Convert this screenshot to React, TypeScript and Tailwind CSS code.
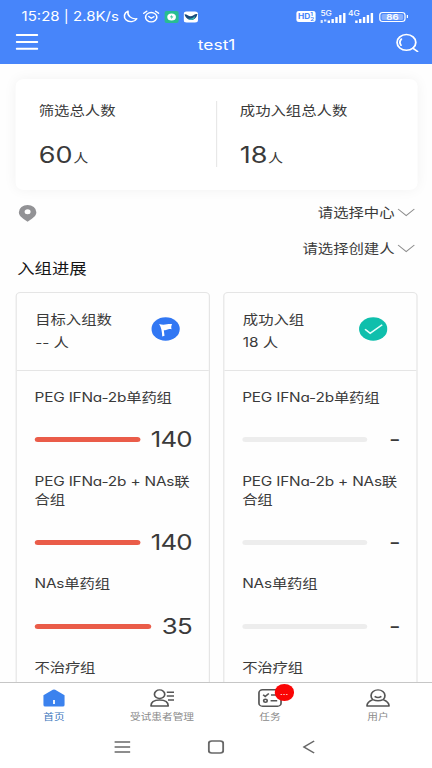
import { useState } from 'react';

type Group = { name: string; target?: number };

const groups: Group[] = [
  { name: 'PEG IFNa-2b单药组', target: 140 },
  { name: 'PEG IFNa-2b + NAs联合组', target: 140 },
  { name: 'NAs单药组', target: 35 },
  { name: '不治疗组' },
];

function SignalBars({ label, small }: { label: string; small?: boolean }) {
  return (
    <div className="relative h-[12px] w-[22px]">
      <span className="absolute -top-[1px] left-0 text-[7px] leading-[8px] font-medium">{label}</span>
      <svg className="absolute bottom-0 right-0" width="22" height="12" viewBox="0 0 22 12" fill="currentColor">
        {small && <path d="M0 9h2v3H0zM3 8.500h2v2H3z" opacity=".8" />}
        <rect x="6" y="9.500" width="2" height="2.500" />
        <rect x="9.200" y="8" width="2" height="4" />
        <rect x="12.400" y="6" width="2" height="6" />
        <rect x="15.600" y="4" width="2" height="8" />
        <rect x="18.900" y="2" width="2" height="10" />
      </svg>
    </div>
  );
}

function StatusBar() {
  return (
    <div className="flex h-[32px] items-center pl-[18px] pr-[20px] pt-[1px] text-white">
      <span className="w-[82px] whitespace-nowrap text-[12.500px] leading-[16px]">15:28 | 2.8K/s</span>
      <svg className="ml-[1.500px]" width="13" height="13" viewBox="0 0 13 13" fill="none" stroke="currentColor" strokeWidth="1.300">
        <path d="M4.700 1.200a5.500 5.500 0 1 0 7.300 7.500A6.300 6.300 0 0 1 4.700 1.200z" strokeLinejoin="round" />
      </svg>
      <svg className="ml-[4px]" width="14" height="13" viewBox="0 0 14 13" fill="none" stroke="currentColor" strokeWidth="1.300" strokeLinecap="round">
        <circle cx="7" cy="7.200" r="4.700" />
        <path d="M.8 3.300 3.300 1.200M13.200 3.300 10.700 1.200M5 6.500l2 1.700 2.200-1.500" />
      </svg>
      <svg className="ml-[4px]" width="12" height="12" viewBox="0 0 12 12">
        <rect width="12" height="12" rx="2" fill="#28bd91" />
        <circle cx="6" cy="6" r="3.600" fill="#fff" />
        <path d="M6.500 3.700 4.500 6.300H6l-.5 2 2-2.700H6z" fill="#28bd91" />
      </svg>
      <svg className="ml-[4.500px]" width="12" height="12" viewBox="0 0 12 12">
        <rect y=".5" width="12" height="11" rx="2.500" fill="#fff" />
        <path d="M.8 3.200c2.200 0 3.200 2 5 2S9 2.600 11.500 2.900c-.6 3.500-2.500 6-5.200 6C3.600 8.900 1.400 6.500.8 3.200z" fill="#1a4a7c" />
        <path d="M3.500 7.500C6 8.500 8 7 9.500 5c0 2.500-1.500 4-3.200 4-1.200 0-2-.6-2.800-1.500z" fill="#34b9b0" />
      </svg>
      <div className="ml-auto flex items-center">
        <div className="flex h-[11px] w-[16px] items-center justify-center rounded-[2px] bg-white text-[#4785fa]">
          <span className="text-[7px] leading-none font-bold">HD</span>
          <span className="flex flex-col text-[5px] leading-[5px] font-bold"><i className="not-italic">1</i><i className="not-italic">2</i></span>
        </div>
        <div className="ml-[4px]"><SignalBars label="5G" small /></div>
        <div className="ml-[1px]"><SignalBars label="4G" /></div>
        <div className="ml-[4px] flex h-[10px] w-[22px] items-center justify-center rounded-[3px] border border-white p-[1px]">
          <span className="flex h-full w-full items-center justify-center rounded-[1.500px] bg-white/35 text-[8px] leading-none font-semibold">86</span>
        </div>
        <span className="ml-[1px] h-[3px] w-[1px] bg-white" />
      </div>
    </div>
  );
}

function Header() {
  return (
    <header className="h-[64px] shrink-0 bg-[#4785fa] text-white">
      <StatusBar />
      <div className="flex h-[32px] items-start justify-between pl-[13px] pr-[11px]">
        <svg className="mt-[1px]" width="19" height="18" viewBox="0 0 19 18" stroke="currentColor" strokeWidth="1.900" strokeLinecap="round">
          <path d="M1 2h17M1 9h17M1 15.700h17" />
        </svg>
        <h1 className="mt-[2px] text-[14.500px] leading-[22px]">test1</h1>
        <svg width="20" height="20" viewBox="0 0 20 20" fill="none" stroke="currentColor" strokeWidth="1.500" strokeLinecap="round">
          <circle cx="9.700" cy="10.400" r="7.800" />
          <path d="m15 16.200 4 3.300M5.200 13.300a5.500 5.500 0 0 1 .3-6.300" />
        </svg>
      </div>
    </header>
  );
}

function Total({ label, value }: { label: string; value: number }) {
  return (
    <div className="flex-1">
      <p className="text-[12.800px] leading-[20px]">{label}</p>
      <p className="mt-[19px] flex items-baseline leading-[30px]">
        <span className="text-[22.500px]">{value}</span>
        <span className="ml-[.5px] text-[12.500px]">人</span>
      </p>
    </div>
  );
}

function Select({ label }: { label: string }) {
  return (
    <button className="flex h-[36px] items-center gap-[2px] text-[12.800px] leading-[20px]">
      {label}
      <svg width="15" height="9" viewBox="0 0 15 9" fill="none" stroke="#8b8b8b" strokeWidth="1">
        <path d="m.7 1 6.800 6.500L14.300 1" />
      </svg>
    </button>
  );
}

function GroupRow({ group, done }: { group: Group; done?: boolean }) {
  return (
    <div>
      <p className="text-[12.800px] leading-[18.500px] tracking-[-0.150px]">{group.name}</p>
      {group.target !== undefined && (
        <div className="flex h-[65.500px] items-center">
          {done ? (
            <>
              <span className="h-[5px] w-[104px] rounded-full bg-[#ededed]" />
              <span className="ml-auto mr-[-1px] text-[21px] leading-none">-</span>
            </>
          ) : (
            <>
              <span className="h-[5px] flex-1 rounded-full bg-[#ea5c49]" />
              <span className="ml-[9px] text-[21.500px] leading-none tracking-[-0.700px]">{group.target}</span>
            </>
          )}
        </div>
      )}
    </div>
  );
}

function ProgressCard({ title, count, done }: { title: string; count: string; done?: boolean }) {
  return (
    <section className="h-[480px] w-[161.500px] rounded-[4px] border border-[#e5e5e5]">
      <div className="flex h-[78px] items-start justify-between border-b border-[#e5e5e5] pl-[15px] pr-[23.500px] pt-[16px]">
        <div className="text-[12.800px] leading-[22.500px]">
          <p>{title}</p>
          <p>{count} 人</p>
        </div>
        <svg className="mt-[8px]" width="24" height="24" viewBox="0 0 24 24">
          <circle cx="12" cy="12" r="11.800" fill={done ? '#0fbfac' : '#3177f3'} />
          {done ? (
            <path d="m5.200 12.300 4.300 3.900 10-8.400" fill="none" stroke="#e4fffa" strokeWidth="1.500" />
          ) : (
            <path d="M6.600 7c2.500 1 4.500.8 6.500.3 1.500-.4 2.700-.3 4.300-.3-.8 1.900-.9 3.600-.4 5.300-1.800-.4-2.700-.2-4 .4-1 .5-1.800.5-2.500.5l.6 5.600-1.900.6C9 14.500 8.500 10.500 6.600 7z" fill="#fff" />
          )}
        </svg>
      </div>
      <div className="pt-[17.500px] pr-[14px] pl-[14.500px]">
        {groups.map((group) => (
          <GroupRow key={group.name} group={group} done={done} />
        ))}
      </div>
    </section>
  );
}

const tabs = [
  {
    label: '首页',
    icon: (
      <svg width="20" height="18" viewBox="0 0 20 18">
        <path d="M1.200 6.300 9 .8q1-.6 2 0l7.800 5.500V16q0 1.500-1.500 1.500H2.700Q1.200 17.500 1.200 16z" fill="#3b82ee" />
        <path d="M10 11v4" stroke="#fff" strokeWidth="1.500" />
      </svg>
    ),
  },
  {
    label: '受试患者管理',
    icon: (
      <svg width="20" height="18" viewBox="0 0 20 18" fill="none" stroke="#555" strokeWidth="1.400" strokeLinejoin="round">
        <circle cx="8" cy="5.200" r="4.300" />
        <path d="M.8 17c0-4.500 3-6 7.200-6s7.200 1.500 7.200 6zM14 3.200h6M14 7h6M15 11h5" />
      </svg>
    ),
  },
  {
    label: '任务',
    icon: (
      <svg width="20" height="18" viewBox="0 0 20 18" fill="none" stroke="#555" strokeWidth="1.400">
        <rect x=".8" y=".8" width="18.400" height="16.400" rx="3" />
        <path d="m4.300 5.800 1.700 1.700L9 4.500M10.800 6H16M10.500 11.700H16" />
        <circle cx="6.200" cy="11.800" r="1.500" />
      </svg>
    ),
  },
  {
    label: '用户',
    icon: (
      <svg width="20" height="18" viewBox="0 0 20 18" fill="none" stroke="#555" strokeWidth="1.400" strokeLinejoin="round">
        <path d="M5.700 10.600a5.800 5.800 0 1 1 8.600 0M7.200 7.400q2.800 2.400 5.600 0M.8 17c0-4 2.700-5.400 4.900-6.400q4.300 2.200 8.600 0c2.200 1 4.900 2.400 4.900 6.400z" />
      </svg>
    ),
  },
];

function TabBar() {
  const [active, setActive] = useState(0);

  return (
    <nav className="flex h-[44px] shrink-0 border-t border-[#c6c6c6] bg-white">
      {tabs.map((tab, i) => (
        <button key={tab.label} onClick={() => setActive(i)} className="flex flex-1 flex-col items-center pt-[6px]">
          <span className="relative">
            {tab.icon}
            {i === 2 && (
              <span className="absolute -top-[5px] left-[13.500px] flex h-[16.500px] w-[16.500px] items-center justify-center rounded-full bg-[#fa0505] text-[8px] leading-none text-white">
                ...
              </span>
            )}
          </span>
          <span className={`mt-[3px] text-[8.900px] leading-[13px] ${i === active ? 'text-[#3d76bd]' : 'text-[#8a8a8a]'}`}>
            {tab.label}
          </span>
        </button>
      ))}
    </nav>
  );
}

function SystemNav() {
  return (
    <div className="flex h-[42px] shrink-0 items-center justify-between bg-white pl-[95px] pr-[97.500px] text-[#686868]">
      <svg width="14" height="14" viewBox="0 0 14 14" stroke="currentColor" strokeWidth="1.600">
        <path d="M.5 2h13M.5 7h13M.5 12h13" />
      </svg>
      <svg width="14" height="14" viewBox="0 0 14 14" fill="none" stroke="currentColor" strokeWidth="1.600">
        <rect x="1" y="1" width="12" height="12" rx="2.500" />
      </svg>
      <svg width="11" height="14" viewBox="0 0 11 14" fill="none" stroke="currentColor" strokeWidth="1.500">
        <path d="M9.800 1 1.300 7l8.500 6" />
      </svg>
    </div>
  );
}

export default function App() {
  return (
    <div className="h-[768px] w-[432px] overflow-hidden bg-white">
      <div className="flex h-full w-[360px] origin-top-left scale-x-120 flex-col font-[Inter,'Noto_Sans_CJK_SC',sans-serif] text-[#3a3a3a] [font-feature-settings:'cv11']">
        <Header />
        <main className="min-h-0 flex-1 overflow-hidden bg-[#fefefe] pt-[15px] pr-[12.200px] pl-[13.300px]">
          <section className="flex h-[111px] rounded-[7px] bg-white pl-[19px] pt-[22px] shadow-[0_0_12px_rgba(0,0,0,0.05)]">
            <Total label="筛选总人数" value={60} />
            <span className="mr-[18.500px] h-[66px] w-px bg-[#e8e8e8]" />
            <Total label="成功入组总人数" value={18} />
          </section>
          <div className="mt-[4.500px] flex items-start justify-between">
            <svg className="mt-[9px] ml-[1.500px]" width="16" height="18" viewBox="0 0 16 18">
              <path fillRule="evenodd" fill="#929295" d="M8 1a7.300 7.300 0 0 1 7.300 7.200c0 4.300-4.300 6.800-7.300 9.500C5 15 .7 12.500.7 8.200A7.300 7.300 0 0 1 8 1zm0 4.200a2.500 2.500 0 1 0 0 5 2.500 2.500 0 0 0 0-5z" />
            </svg>
            <div className="flex flex-col items-end pr-[2px]">
              <Select label="请选择中心" />
              <Select label="请选择创建人" />
            </div>
          </div>
          <h2 className="-mt-[10px] pl-[1px] text-[14.500px] leading-[24px] text-[#151515]">入组进展</h2>
          <div className="mt-[11.500px] flex justify-between">
            <ProgressCard title="目标入组数" count="--" />
            <ProgressCard title="成功入组" count="18" done />
          </div>
        </main>
        <TabBar />
        <SystemNav />
      </div>
    </div>
  );
}
